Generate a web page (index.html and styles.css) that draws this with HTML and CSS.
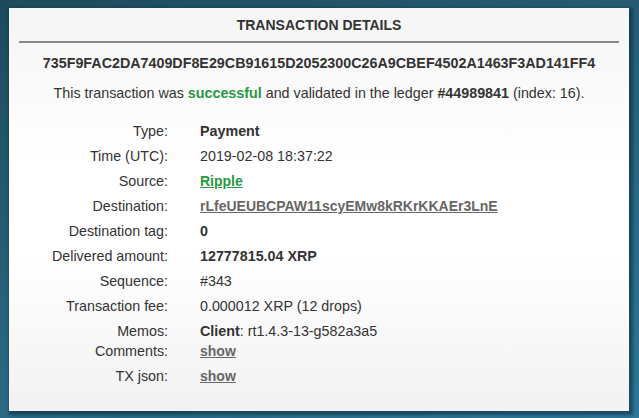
FILE: index.html
```html
<!DOCTYPE html>
<html lang="en">
  <head>
    <meta charset="UTF-8" />
    <title>Transaction Details</title>
    <link rel="stylesheet" href="styles.css">
  </head>
  <body>
    <div class="panel">
      <div class="panel-title">TRANSACTION DETAILS</div>
      <div class="hash">735F9FAC2DA7409DF8E29CB91615D2052300C26A9CBEF4502A1463F3AD141FF4</div>
      <p class="summary">
        This transaction was <strong class="ok">successful</strong> and validated in the ledger
        <strong>#44989841</strong> (index: 16).
      </p>
      <div class="details">
        <div class="label">Type:</div>
        <div class="value"><strong>Payment</strong></div>

        <div class="label">Time (UTC):</div>
        <div class="value">2019-02-08 18:37:22</div>

        <div class="label">Source:</div>
        <div class="value"><a class="link green" href="javascript:;">Ripple</a></div>

        <div class="label">Destination:</div>
        <div class="value"><a class="link" href="javascript:;">rLfeUEUBCPAW11scyEMw8kRKrKKAEr3LnE</a></div>

        <div class="label">Destination tag:</div>
        <div class="value"><strong>0</strong></div>

        <div class="label">Delivered amount:</div>
        <div class="value"><strong>12777815.04 XRP</strong></div>

        <div class="label">Sequence:</div>
        <div class="value">#343</div>

        <div class="label">Transaction fee:</div>
        <div class="value">0.000012 XRP (12 drops)</div>

        <div class="label">Memos:</div>
        <div class="value"><strong>Client</strong>: rt1.4.3-13-g582a3a5</div>

        <div class="label tight">Comments:</div>
        <div class="value tight"><a class="link" href="javascript:;">show</a></div>

        <div class="label">TX json:</div>
        <div class="value"><a class="link" href="javascript:;">show</a></div>
      </div>
    </div>
  </body>
</html>
```

FILE: styles.css
```css
html, body {
  height: 100%;
}
body {
  margin: 0;
  padding: 8px 10px 7px 9px;
  box-sizing: border-box;
  font: 14.3px 'Liberation Sans', Arial, sans-serif;
  color: #333;
  background: linear-gradient(160deg, #1d4a5c 0%, #28617a 45%, #2f7898 100%);
}
.panel {
  height: 100%;
  box-sizing: border-box;
  padding: 0 10px;
  background: linear-gradient(#f5f5f5 0%, #ffffff 40%, #ffffff 60%, #f2f2f2 100%);
  box-shadow: 2px 2px 3px 2px rgba(10, 40, 55, 0.55);
}
.panel-title {
  text-align: center;
  font-weight: bold;
  font-size: 14px;
  line-height: 16px;
  padding: 9px 0 8px;
  border-bottom: 2px solid #888;
}
.hash {
  text-align: center;
  font-weight: bold;
  margin-top: 12px;
}
.summary {
  text-align: center;
  margin: 14px 0 22px;
}
.ok {
  color: #27993f;
}
.details {
  display: grid;
  grid-template-columns: 149px 1fr;
  column-gap: 32px;
  row-gap: 9px;
  line-height: 16px;
}
.label {
  text-align: right;
}
.tight {
  margin-top: -5px;
}
.link {
  color: #666;
  font-weight: bold;
  font-size: 14px;
}
.link:hover {
  color: #900;
}
.link.green {
  color: #27993f;
}
```
